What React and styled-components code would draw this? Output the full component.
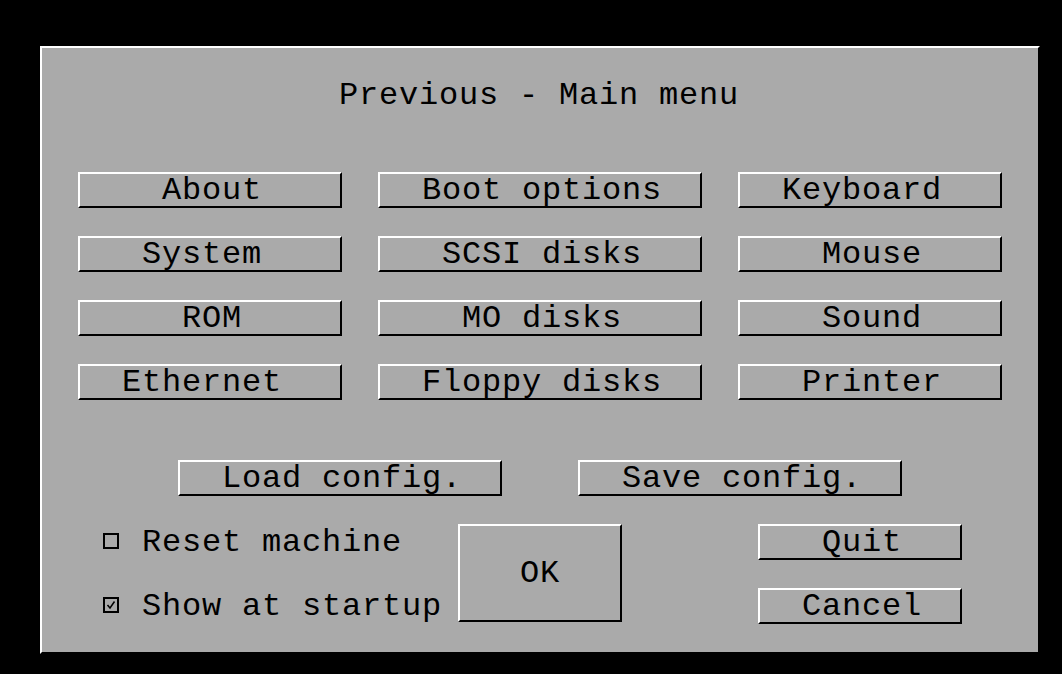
import React from 'react';
import styled, { createGlobalStyle } from 'styled-components';

// Hatari-style SDL GUI: everything sits on a 20x32 character grid

const CELL = 20;

const GlobalStyle = createGlobalStyle`
  html, body {
    margin: 0;
    padding: 0;
    background: #000;
  }
  body {
    font-family: "Liberation Mono", "DejaVu Sans Mono", monospace;
  }
`;

const Screen = styled.div`
  width: 1062px;
  height: 674px;
  box-sizing: border-box;
  padding: 46px 0 0 40px;
  background: #000;
  overflow: hidden;
`;

const Dialog = styled.div`
  width: 1000px;
  height: 608px;
  box-sizing: border-box;
  background: #aaaaaa;
  border: 2px solid;
  border-color: #fff #000 #000 #fff;
  display: flex;
  flex-direction: column;
  color: #000;
  font-size: 32px;
  line-height: 32px;
  letter-spacing: 0.8px;
`;

const Title = styled.div`
  margin-top: 32px;
  height: 32px;
  padding-right: 2px;
  text-align: center;
  white-space: pre;
`;

const ButtonGrid = styled.div`
  margin: 60px 0 0 36px;
  display: grid;
  grid-template-columns: 264px 324px 264px;
  grid-auto-rows: 36px;
  column-gap: 36px;
  row-gap: 28px;
`;

const ConfigRow = styled.div`
  margin: 60px 0 0 136px;
  display: flex;
  gap: 76px;
`;

const BottomRow = styled.div`
  margin: 28px 0 0 60px;
  display: flex;
  align-items: flex-start;
`;

const CheckColumn = styled.div`
  width: 356px;
  display: flex;
  flex-direction: column;
  gap: 28px;
`;

const SideColumn = styled.div`
  margin-left: 136px;
  width: 204px;
  display: flex;
  flex-direction: column;
  gap: 28px;
`;

const Button = styled.div`
  width: ${(p) => p.$w}px;
  height: 36px;
  box-sizing: border-box;
  border: 2px solid;
  border-color: #fff #000 #000 #fff;
  padding: 1px 0 0 ${(p) => p.$pad}px;
  white-space: pre;
  overflow: hidden;
`;

const BigButton = styled.div`
  width: 164px;
  height: 98px;
  box-sizing: border-box;
  border: 2px solid;
  border-color: #fff #000 #000 #fff;
  padding-top: 2px;
  display: flex;
  align-items: center;
  justify-content: center;
`;

const CheckRow = styled.div`
  height: 36px;
  box-sizing: border-box;
  padding-top: 3px;
  display: flex;
  align-items: flex-start;
  white-space: pre;
`;

const CheckLabel = styled.span`
  margin-left: 20px;
`;

const BoxSvg = styled.svg`
  flex: none;
  display: block;
`;

const Checkbox = ({ checked }) => (
  <BoxSvg width="20" height="32" viewBox="0 0 20 32">
    <rect x="2" y="7" width="14" height="14" fill="none" stroke="#000" strokeWidth="2" />
    {checked && (
      <path d="M5.5 14 L8 17 L12.5 10.5" fill="none" stroke="#000" strokeWidth="1.5" />
    )}
  </BoxSvg>
);

// Text is left aligned on the char grid, centred by whole characters
const MenuButton = ({ w, label }) => {
  const cols = Math.floor(w / CELL);
  const pad = Math.floor((cols - label.length) / 2) * CELL + 2;
  return (
    <Button $w={w} $pad={pad}>
      {label}
    </Button>
  );
};

const grid = [
  ['About', 'Boot options', 'Keyboard'],
  ['System', 'SCSI disks', 'Mouse'],
  ['ROM', 'MO disks', 'Sound'],
  ['Ethernet', 'Floppy disks', 'Printer'],
];
const colWidths = [264, 324, 264];

export default function App() {
  return (
    <>
      <GlobalStyle />
      <Screen>
        <Dialog>
          <Title>Previous - Main menu</Title>

          <ButtonGrid>
            {grid.flatMap((row) =>
              row.map((label, i) => (
                <MenuButton key={label} w={colWidths[i]} label={label} />
              ))
            )}
          </ButtonGrid>

          <ConfigRow>
            <MenuButton w={324} label="Load config." />
            <MenuButton w={324} label="Save config." />
          </ConfigRow>

          <BottomRow>
            <CheckColumn>
              <CheckRow>
                <Checkbox />
                <CheckLabel>Reset machine</CheckLabel>
              </CheckRow>
              <CheckRow>
                <Checkbox checked />
                <CheckLabel>Show at startup</CheckLabel>
              </CheckRow>
            </CheckColumn>
            <BigButton>OK</BigButton>
            <SideColumn>
              <MenuButton w={204} label="Quit" />
              <MenuButton w={204} label="Cancel" />
            </SideColumn>
          </BottomRow>
        </Dialog>
      </Screen>
    </>
  );
}
